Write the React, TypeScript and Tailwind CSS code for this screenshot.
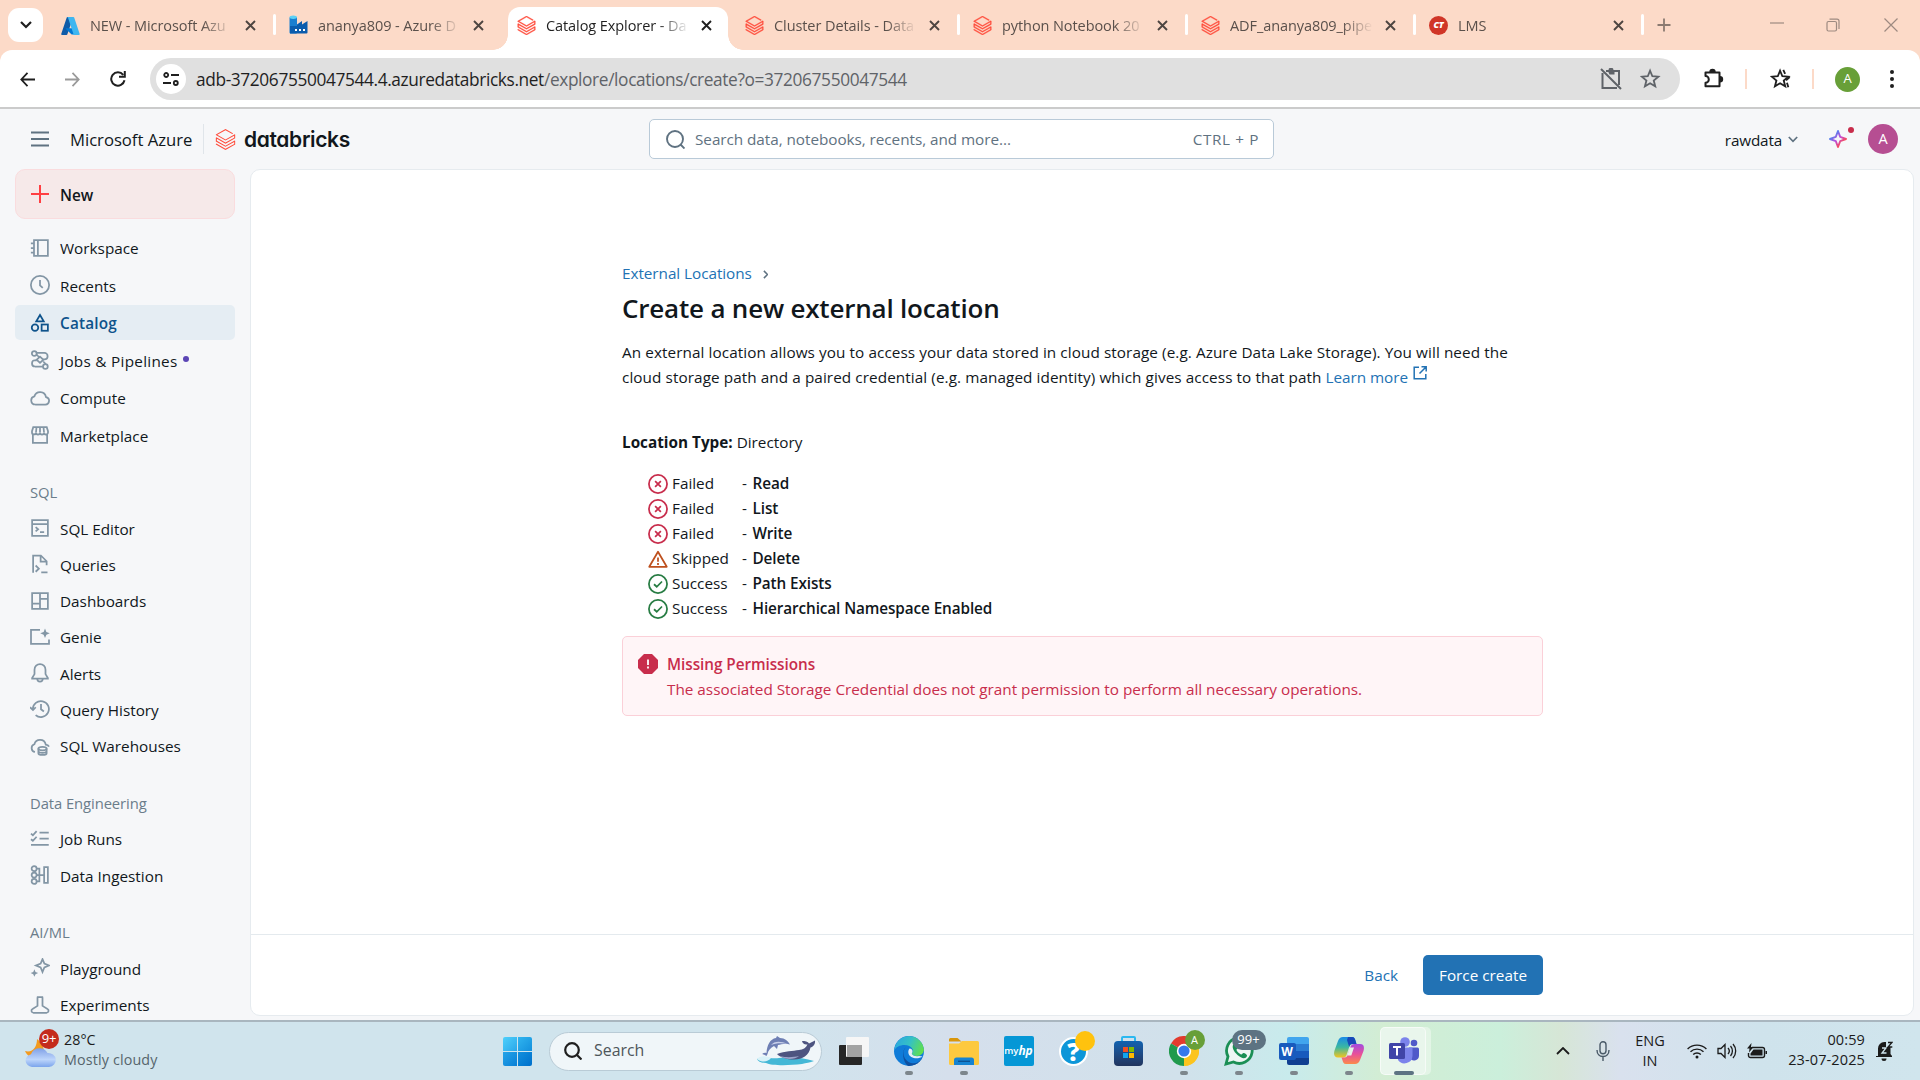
import type { ReactNode } from "react";
import { SiDatabricks } from "react-icons/si";

/* ---------- shared 16-unit line icon ---------- */
function Ico({ children, className = "size-5 text-[#8396a5]" }: { children: ReactNode; className?: string }) {
  return (
    <svg viewBox="0 0 16 16" className={className} fill="none" stroke="currentColor" strokeWidth="1.4">
      {children}
    </svg>
  );
}

const icons: Record<string, ReactNode> = {
  workspace: (
    <>
      <rect x="3.2" y="1.7" width="11.1" height="12.6" />
      <path d="M6.3 1.7v12.6M.7 4.3h2.5M.7 8h2.5M.7 11.7h2.5" />
    </>
  ),
  recents: (
    <>
      <circle cx="8" cy="8" r="7.3" />
      <path d="M8 4v4.3l2.2 2" />
    </>
  ),
  catalog: (
    <>
      <path d="M8 1.6l3 5H5z" />
      <circle cx="4" cy="11.7" r="2.6" />
      <rect x="9.3" y="9.2" width="5" height="5" />
    </>
  ),
  jobs: (
    <>
      <circle cx="3.4" cy="2.7" r="1.9" />
      <circle cx="12.3" cy="13.2" r="1.9" />
      <path d="M5.3 2.3h6.2a2.6 2.6 0 0 1 2.6 2.6c0 1.6-1.2 2.5-2.6 2.5h-1M5.4 8.2H4a2.5 2.5 0 0 0-2.4 2.5A2.5 2.5 0 0 0 4 13.2h6.3" />
      <path d="M8 5.3l2.7 2.5L8 10.3 5.300 7.8zM5.200 3.600l2 2M10.600 9.200l2 2" />
    </>
  ),
  compute: <path d="M4.200 13.200h8a3 3 0 0 0 .6-5.950A4.800 4.800 0 0 0 3.500 6.700a3.300 3.300 0 0 0 .7 6.500z" />,
  marketplace: (
    <>
      <path d="M2.300 7.500v6.800h11.400V7.500M2.600 1.700h10.800l1 3.300v1a1.600 1.600 0 0 1-3.200 0 1.600 1.600 0 0 1-3.200 0 1.600 1.600 0 0 1-3.200 0 1.600 1.600 0 0 1-3.200 0V5z" />
      <path d="M4.800 5.800l.4-4M8 5.800v-4M11.200 5.800l-.4-4" />
    </>
  ),
  sqlEditor: (
    <>
      <rect x="1.700" y="1.700" width="12.600" height="12.600" />
      <path d="M1.700 4.800h12.600M4.500 7.300l2 1.700-2 1.700M8 11.300h3.300" />
    </>
  ),
  queries: (
    <>
      <path d="M2.500 15V1.200h6.200l4.600 4.600V9M8.500 1.200V6h4.800" />
      <path d="M4.500 9.200l2.600 2.500-2.600 2.500M9 14.600h5" />
    </>
  ),
  dashboards: (
    <>
      <rect x="1.700" y="1.700" width="12.600" height="12.600" />
      <path d="M8 1.700v12.600M1.700 10H8M8 6.200h6.300" />
    </>
  ),
  genie: (
    <>
      <path d="M8 2.200H.8v11.200h14.400V10" />
      <path d="M12 1.200l1.100 2.700L15.800 5l-2.700 1.100L12 8.800l-1.100-2.700L8.200 5l2.700-1.100z" fill="currentColor" stroke="none" />
    </>
  ),
  alerts: (
    <>
      <path d="M8 .9a4.400 4.400 0 0 0-4.400 4.400v3.600L1.700 12v.4h12.600V12l-1.900-3.100V5.300A4.400 4.400 0 0 0 8 .9z" />
      <path d="M5.800 12.600a2.200 2.200 0 0 0 4.400 0" />
    </>
  ),
  history: (
    <>
      <path d="M2.300 8.200a6.400 6.400 0 1 1 2.200 4.700" />
      <path d="M0 6.600l2.400 2.300 2.200-2.300M8.800 4v4.200l2.300 1.800" />
    </>
  ),
  warehouses: (
    <>
      <path d="M4 12.800A3.200 3.200 0 0 1 3.500 6.600 4.700 4.700 0 0 1 12.600 6.800c1.200 0 2.200.7 2.600 1.700" />
      <ellipse cx="10" cy="10" rx="3.300" ry="1.400" />
      <path d="M6.700 10v3.700c0 .8 1.500 1.400 3.300 1.400s3.300-.6 3.300-1.400V10M6.700 12c0 .8 1.500 1.400 3.300 1.400s3.300-.6 3.300-1.400" />
    </>
  ),
  jobRuns: <path d="M.8 3.700l1.500 1.300 3-3.300M.8 8.200l1.500 1.300 3-3.300M7.600 2.800H15M7.600 7.700H15M.8 12.700H15" />,
  ingestion: (
    <>
      <circle cx="3.300" cy="2.900" r="2" />
      <circle cx="3.300" cy="8" r="2" />
      <circle cx="3.300" cy="13.100" r="2" />
      <path d="M5.300 2.900h2.200v10.200H5.300M5.300 8h5.500M14.300 1.700h-3v12.600h3zM7.500 8h3.800" />
    </>
  ),
  playground: (
    <>
      <path d="M10 .9l1.500 3.600 3.700 1.500-3.700 1.500L10 11.200 8.500 7.500 4.800 6l3.700-1.500z" />
      <path d="M3.500 9l.9 2.100 2.100.9-2.100.9-.9 2.100-.9-2.100L.5 12l2.100-.9z" fill="currentColor" stroke="none" />
    </>
  ),
  experiments: (
    <path d="M5.500 1.700h5M6 1.700v7L2 11.200a1.600 1.600 0 0 0 .6 3h10.800a1.600 1.600 0 0 0 .6-3L10 8.700v-7" />
  ),
};

/* ---------- browser chrome ---------- */
function Cross({ className = "size-[11px] text-[#4d4541]" }: { className?: string }) {
  return (
    <svg viewBox="0 0 11 11" className={className} stroke="currentColor" strokeWidth="1.9">
      <path d="M1 1l9 9M10 1l-9 9" />
    </svg>
  );
}

const AzureLogo = () => (
  <svg viewBox="0 0 96 96" className="size-[19px]">
    <path d="M33.300 5h28.400L32.200 92.400a4.500 4.500 0 0 1-4.300 3H5.800a4.500 4.500 0 0 1-4.300-6L29 8a4.500 4.500 0 0 1 4.300-3z" fill="#0f5ba8" />
    <path d="M71.200 62.300H26.100a2.100 2.100 0 0 0-1.400 3.600l29 27a4.500 4.500 0 0 0 3 1.200h25.600z" fill="#0078d4" />
    <path d="M66.600 8a4.500 4.500 0 0 0-4.300-3H30.700A4.500 4.500 0 0 1 35 8l27.400 81.400a4.500 4.500 0 0 1-4.300 6h31.600a4.500 4.500 0 0 0 4.300-6z" fill="#3fb6f0" />
  </svg>
);

const FactoryLogo = () => (
  <svg viewBox="0 0 20 20" className="size-5">
    <rect x=".5" y="2" width="7.500" height="16.500" rx="1" fill="#1b7fd0" />
    <ellipse cx="4.250" cy="2.300" rx="3.700" ry="1.700" fill="#5cd0f5" />
    <path d="M1 18.500V11h7V9.500l5-3.500v3.500L18.500 6v11.500a1 1 0 0 1-1 1z" fill="#0b5cad" />
    <path d="M6 14h2v2H6zM10 14h2v2h-2zM14 14h2v2h-2z" fill="#fff" />
  </svg>
);

const Bricks = () => <SiDatabricks className="size-[19px] stroke-[#ff4b3a] stroke-[0.5px] text-[#ff4b3a]" />;

const LmsLogo = () => (
  <span className="flex size-[19px] items-center justify-center rounded-full bg-[#d03527] text-[9px] font-extrabold italic tracking-tight text-white">
    CT
  </span>
);

type TabInfo = { title: string; icon: ReactNode; active?: boolean; sep?: boolean };
const tabs: TabInfo[] = [
  { title: "NEW - Microsoft Azu", icon: <AzureLogo />, sep: true },
  { title: "ananya809 - Azure D", icon: <FactoryLogo /> },
  { title: "Catalog Explorer - Da", icon: <Bricks />, active: true },
  { title: "Cluster Details - Data", icon: <Bricks />, sep: true },
  { title: "python Notebook 20", icon: <Bricks />, sep: true },
  { title: "ADF_ananya809_pipe", icon: <Bricks />, sep: true },
  { title: "LMS", icon: <LmsLogo />, sep: true },
];

function Tab({ title, icon, active, sep }: TabInfo) {
  return (
    <div className="relative flex h-[50px] w-[228px] shrink-0 items-center pl-[13px]">
      {active && (
        <>
          <div className="absolute top-[7px] bottom-0 left-[4px] w-[220px] rounded-t-[12px] bg-white" />
          <div className="absolute bottom-0 left-[-11px] size-[15px] bg-[radial-gradient(circle_at_0_0,transparent_14.500px,white_15px)]" />
          <div className="absolute bottom-0 left-[224px] size-[15px] bg-[radial-gradient(circle_at_100%_0,transparent_14.500px,white_15px)]" />
        </>
      )}
      <span className="relative flex w-[29px] shrink-0">{icon}</span>
      <span
        className={
          "relative mt-px w-[144px] text-[14.500px] leading-6 tracking-[-0.080px] whitespace-nowrap [mask-image:linear-gradient(to_right,black_112px,transparent_143px)] " +
          (active ? "text-[#1f1f1f]" : "text-[#5a504b]")
        }
      >
        {title}
      </span>
      <span className="relative ml-[11px]">
        <Cross className={active ? "size-[11px] text-[#1f1f1f]" : "size-[11px] text-[#4d4541]"} />
      </span>
      {sep && <span className="absolute top-[14px] right-0 h-[21px] w-[3px] rounded bg-white" />}
    </div>
  );
}

function TabStrip() {
  return (
    <div className="flex h-[50px] items-center bg-[#fcdac8] pl-2">
      <div className="mr-[5px] flex h-[34px] w-[35px] items-center justify-center rounded-[11px] bg-white">
        <svg viewBox="0 0 12 8" className="w-3" fill="none" stroke="#1f1f1f" strokeWidth="2.200">
          <path d="M1 1l5 5 5-5" />
        </svg>
      </div>
      {tabs.map((t) => (
        <Tab key={t.title} {...t} />
      ))}
      <svg viewBox="0 0 14 14" className="ml-[13px] size-[14px]" stroke="#8b7a71" strokeWidth="1.800">
        <path d="M7 .5v13M.5 7h13" />
      </svg>
      <div className="ml-auto flex items-center pr-[22px] text-[#9d8a80]">
        <svg viewBox="0 0 14 14" className="mb-1 size-[14px]" stroke="currentColor" strokeWidth="1.200">
          <path d="M0 7h14" />
        </svg>
        <svg viewBox="0 0 14 14" className="ml-[42px] size-[14px]" fill="none" stroke="currentColor" strokeWidth="1.200">
          <rect x="1" y="3.500" width="9.500" height="9.500" rx="1.500" />
          <path d="M3.500 1.200H11a2 2 0 0 1 2 2V11" />
        </svg>
        <svg viewBox="0 0 14 14" className="ml-[44px] size-[14px]" stroke="currentColor" strokeWidth="1.200">
          <path d="M.5.5l13 13M13.500.5l-13 13" />
        </svg>
      </div>
    </div>
  );
}

function Star({ lines = false }: { lines?: boolean }) {
  return (
    <svg viewBox="0 0 24 24" className="size-[22px]" fill="none" stroke="currentColor" strokeWidth="2">
      <path d="M11 3l2.500 6 6.500.5-5 4.200 1.600 6.300-5.600-3.400L5.400 20 7 13.700 2 9.500l6.500-.5z" />
      {lines && <path d="M14.500 2l2 4.500M17.500 13.500l4-3.500M18.500 16l1.500 5" />}
    </svg>
  );
}

function Toolbar() {
  return (
    <div className="bg-[#fcdac8]">
      <div className="flex h-[57px] items-center rounded-t-[12px] bg-white pt-px pl-5">
        <svg viewBox="0 0 16 16" className="size-[15px]" fill="none" stroke="#1f1f1f" strokeWidth="1.900">
          <path d="M8 1L1.400 8 8 15M1.400 8H16" />
        </svg>
        <svg viewBox="0 0 16 16" className="ml-[30px] size-[15px]" fill="none" stroke="#9a9a9a" strokeWidth="1.900">
          <path d="M8 1l6.600 7L8 15M14.600 8H0" />
        </svg>
        <svg viewBox="0 0 16 16" className="ml-[30px] size-4" fill="none" stroke="#1f1f1f" strokeWidth="2">
          <path d="M14.500 9.300A6.700 6.700 0 1 1 13.200 3.800M14.800 0v5.700H9" />
        </svg>
        <div className="ml-6 flex h-[42px] w-[1530px] items-center rounded-full bg-[#e0e0e0] pl-[6px]">
          <div className="flex size-[30px] items-center justify-center rounded-full bg-white">
            <svg viewBox="0 0 16 16" className="size-4" fill="none" stroke="#1f1f1f" strokeWidth="1.800">
              <circle cx="3.200" cy="4" r="2" />
              <path d="M8 4h8M0 12h8" />
              <circle cx="12.800" cy="12" r="2" />
            </svg>
          </div>
          <div className="mt-[2px] ml-[10px] text-[17.300px] leading-7 tracking-[-0.370px] whitespace-nowrap text-[#5f6368]">
            <span className="text-[#1f1f1f]">adb-372067550047544.4.azuredatabricks.net</span>
            /explore/locations/create?o=372067550047544
          </div>
          <div className="ml-auto flex items-center gap-[18px] pr-[18px] text-[#5f6368]">
            <svg viewBox="0 0 22 22" className="size-[22px]" fill="none" stroke="currentColor" strokeWidth="2">
              <path d="M6 3h13v14M2.500 5v15H17M1 1l20 20" />
              <path d="M7.500 2h7v4.500h-5z" fill="currentColor" stroke="none" />
              <circle cx="11" cy="2.200" r="1.500" />
            </svg>
            <Star />
          </div>
        </div>
        <svg viewBox="0 0 22 22" className="ml-[22px] size-[22px] text-[#1f1f1f]" fill="none" stroke="currentColor" strokeWidth="2">
          <path d="M3.500 4.500h14v13.800h-14v-3.600a3.300 3.300 0 0 0 0-6.600z" strokeLinejoin="round" />
          <path d="M8.300 4a2.200 2.200 0 0 1 4.400 0M18 9a2.200 2.200 0 0 1 0 4.400" fill="currentColor" />
        </svg>
        <span className="ml-[21px] h-5 w-[2px] bg-[#fcdac8]" />
        <span className="ml-[23px] text-[#1f1f1f]">
          <Star lines />
        </span>
        <span className="ml-[20px] h-5 w-[2px] bg-[#fcdac8]" />
        <span className="ml-[21px] flex size-[25px] items-center justify-center rounded-full bg-[#689f38] text-[13px] text-white">A</span>
        <span className="ml-[30px] flex flex-col gap-[3px]">
          <i className="size-1 rounded-full bg-[#1f1f1f]" />
          <i className="size-1 rounded-full bg-[#1f1f1f]" />
          <i className="size-1 rounded-full bg-[#1f1f1f]" />
        </span>
      </div>
      <div className="h-[2px] bg-[#cbcbcb]" />
    </div>
  );
}

/* ---------- application ---------- */
function AppHeader() {
  return (
    <header className="flex h-[60px] shrink-0 items-center pl-[31px]">
      <svg viewBox="0 0 18 16" className="h-4 w-[18px]" stroke="#5f7281" strokeWidth="2">
        <path d="M0 1.500h18M0 8h18M0 14.500h18" />
      </svg>
      <span className="mt-px ml-[21px] w-[123px] text-[16.700px] tracking-[-0.030px] whitespace-nowrap text-[#11171c]">Microsoft Azure</span>
      <span className="ml-[10px] h-[30px] w-px bg-[#e0e5ea]" />
      <SiDatabricks className="ml-[11px] size-[21px] text-[#ff4b3a]" />
      <span className="mt-px ml-[8px] w-[107px] font-['Inter',sans-serif] text-[21px] leading-6 font-semibold tracking-[-0.350px] whitespace-nowrap text-[#11171c] [font-feature-settings:'cv11']">
        databricks
      </span>
      <div className="ml-[298px] flex h-10 w-[625px] items-center rounded-[5px] border border-[#b9cad8] bg-white pr-[14px] pl-4 text-[#5f7281]">
        <svg viewBox="0 0 19 19" className="size-[19px]" fill="none" stroke="currentColor" strokeWidth="1.900">
          <circle cx="9" cy="9" r="8" />
          <path d="M14.500 14.500l4 4" />
        </svg>
        <span className="ml-[10px] text-[15.300px] tracking-[-0.050px]">Search data, notebooks, recents, and more...</span>
        <span className="mt-px ml-auto text-[15.300px] tracking-[0.600px]">CTRL + P</span>
      </div>
      <div className="ml-auto flex items-center pr-[22px]">
        <span className="mt-[2px] text-[15.300px] tracking-[-0.180px] text-[#11171c]">rawdata</span>
        <svg viewBox="0 0 10 7" className="ml-[6px] w-[10px]" fill="none" stroke="#5f7281" strokeWidth="1.700">
          <path d="M.8 1L5 5.300 9.200 1" />
        </svg>
        <span className="relative ml-[31px]">
          <svg viewBox="0 0 18 18" className="size-[18px]" fill="none" stroke="url(#spark)" strokeWidth="1.900" strokeLinejoin="round">
            <defs>
              <linearGradient id="spark" x1="0" y1="0" x2="1" y2="1">
                <stop offset=".2" stopColor="#4a86f0" />
                <stop offset=".5" stopColor="#c04bd8" />
                <stop offset=".8" stopColor="#ff4b4b" />
              </linearGradient>
            </defs>
            <path d="M9 1l2.200 5.800L17 9l-5.800 2.200L9 17l-2.200-5.800L1 9l5.800-2.200z" />
          </svg>
          <i className="absolute -top-[3px] left-[19px] size-[6px] rounded-full bg-[#c82d4c]" />
        </span>
        <span className="ml-[21px] flex size-[30px] items-center justify-center rounded-full bg-[#b64e92] text-[14.500px] text-white">A</span>
      </div>
    </header>
  );
}

type Item = { icon: string; label: string; active?: boolean; dot?: boolean };

function NavItem({ icon, label, active, dot }: Item) {
  return (
    <div
      className={
        "flex h-[35px] items-center rounded-[5px] pl-[15px] text-[15.300px] leading-5 " +
        (active ? "bg-[#e5edf3] font-semibold tracking-[0.200px] text-[#0e538b]" : "text-[#11171c]")
      }
    >
      <Ico className={active ? "size-5 text-[#0e538b]" : "size-5 text-[#8396a5]"}>{icons[icon]}</Ico>
      <span className={dot ? "mt-px ml-[10px] tracking-[0.280px] whitespace-nowrap" : "mt-px ml-[10px] whitespace-nowrap"}>
        {label}
      </span>
      {dot && <i className="mb-[3px] ml-[5px] size-[6px] rounded-full bg-[#5b45b5]" />}
    </div>
  );
}

const groups: { title: string; items: Item[] }[] = [
  {
    title: "SQL",
    items: [
      { icon: "sqlEditor", label: "SQL Editor" },
      { icon: "queries", label: "Queries" },
      { icon: "dashboards", label: "Dashboards" },
      { icon: "genie", label: "Genie" },
      { icon: "alerts", label: "Alerts" },
      { icon: "history", label: "Query History" },
      { icon: "warehouses", label: "SQL Warehouses" },
    ],
  },
  {
    title: "Data Engineering",
    items: [
      { icon: "jobRuns", label: "Job Runs" },
      { icon: "ingestion", label: "Data Ingestion" },
    ],
  },
  {
    title: "AI/ML",
    items: [
      { icon: "playground", label: "Playground" },
      { icon: "experiments", label: "Experiments" },
    ],
  },
];

function Sidebar() {
  return (
    <nav className="flex w-[250px] shrink-0 flex-col overflow-hidden pr-[15px] pl-[15px]">
      <div className="flex h-[50px] shrink-0 items-center rounded-[10px] border border-[#fadcde] bg-[#f6e9e9] pl-[15px]">
        <svg viewBox="0 0 18 18" className="size-[18px]" stroke="#ff3f42" strokeWidth="2">
          <path d="M9 0v18M0 9h18" />
        </svg>
        <span className="mt-[3px] ml-[11px] text-[15.300px] font-semibold text-[#11171c]">New</span>
      </div>
      <div className="mt-[11.250px] flex flex-col gap-[2.500px]">
        <NavItem icon="workspace" label="Workspace" />
        <NavItem icon="recents" label="Recents" />
        <NavItem icon="catalog" label="Catalog" active />
        <NavItem icon="jobs" label="Jobs & Pipelines" dot />
        <NavItem icon="compute" label="Compute" />
        <NavItem icon="marketplace" label="Marketplace" />
      </div>
      <div className="mt-[21px]">
        {groups.map((g) => (
          <div key={g.title} className="mb-[21.500px]">
            <div className="flex h-[36.800px] items-center pl-[15px] text-[14.800px] tracking-[-0.080px] text-[#6b7d8b]">{g.title}</div>
            <div className="flex flex-col gap-[1.250px]">
              {g.items.map((i) => (
                <NavItem key={i.label} {...i} />
              ))}
            </div>
          </div>
        ))}
      </div>
    </nav>
  );
}

type Status = "Failed" | "Skipped" | "Success";
const checks: { status: Status; name: string }[] = [
  { status: "Failed", name: "Read" },
  { status: "Failed", name: "List" },
  { status: "Failed", name: "Write" },
  { status: "Skipped", name: "Delete" },
  { status: "Success", name: "Path Exists" },
  { status: "Success", name: "Hierarchical Namespace Enabled" },
];

function StatusIcon({ status }: { status: Status }) {
  if (status === "Failed")
    return (
      <Ico className="size-5 text-[#c82d4c]">
        <circle cx="8" cy="8" r="7.250" />
        <path d="M5.700 5.700l4.600 4.600M10.300 5.700l-4.600 4.600" />
      </Ico>
    );
  if (status === "Skipped")
    return (
      <Ico className="size-5 text-[#be501e]">
        <path d="M8 2.200l7 12H1z" strokeLinejoin="round" />
        <path d="M8 6.700v3.500M8 11.200v1.500" />
      </Ico>
    );
  return (
    <Ico className="size-5 text-[#277c43]">
      <circle cx="8" cy="8" r="7.250" />
      <path d="M4.800 8.200l2.200 2 4.200-4.200" />
    </Ico>
  );
}

function Main() {
  return (
    <main className="mb-[4px] flex w-[1664px] flex-col rounded-[10px] border border-[#e6ebef] bg-white">
      <div className="ml-[371px] w-[921px] flex-1 pt-[90px] text-[15.300px] leading-[25px] text-[#11171c]">
        <div className="flex h-[26px] items-center">
          <span className="tracking-[-0.050px] text-[#2272b4]">External Locations</span>
          <svg viewBox="0 0 6 10" className="mt-[3px] ml-[11px] h-[9px]" fill="none" stroke="#5f7281" strokeWidth="1.700">
            <path d="M1 1l4 4-4 4" />
          </svg>
        </div>
        <h1 className="mt-[2px] text-[26px] leading-10 font-semibold tracking-[-0.200px]">Create a new external location</h1>
        <p className="mt-[12px] tracking-[0.075px] whitespace-nowrap">
          An external location allows you to access your data stored in cloud storage (e.g. Azure Data Lake Storage). You will need the
          <br />
          cloud storage path and a paired credential (e.g. managed identity) which gives access to that path{" "}
          <span className="tracking-[-0.050px] text-[#2272b4]">Learn more</span>
          <svg viewBox="0 0 14 14" className="mb-[11px] ml-[5px] inline size-[14px]" fill="none" stroke="#2272b4" strokeWidth="1.500">
            <path d="M6 1.200H1.200v11.600h11.600V8M8.500.8h4.700v4.700M13 1L6.500 7.500" />
          </svg>
        </p>
        <p className="mt-[39px]">
          <b>Location Type:</b> Directory
        </p>
        <ul className="mt-[16px] pl-[26px]">
          {checks.map((c) => (
            <li key={c.name} className="flex h-[25px] items-center">
              <StatusIcon status={c.status} />
              <span className="ml-[4px] w-[70px]">{c.status}</span>
              <span className="w-[10.500px]">-</span>
              <span className="font-semibold tracking-[-0.100px]">{c.name}</span>
            </li>
          ))}
        </ul>
        <div className="mt-[15px] flex h-20 rounded-[5px] border border-[#fbd0d8] bg-[#fff5f7] pt-[15px] pl-[15px] text-[#c82d4c]">
          <svg viewBox="0 0 20 20" className="mt-[2px] size-5">
            <path d="M6 0h8l6 6v8l-6 6H6l-6-6V6z" fill="#c82d4c" />
            <path d="M10 5.500v5.500M10 12.500v2" stroke="#fff" strokeWidth="1.800" />
          </svg>
          <div className="ml-[9px] whitespace-nowrap">
            <div className="font-semibold tracking-[-0.050px]">Missing Permissions</div>
            <div>The associated Storage Credential does not grant permission to perform all necessary operations.</div>
          </div>
        </div>
      </div>
      <footer className="flex h-[81px] items-center justify-end border-t border-[#e4eaee] pr-[370px] pb-px text-[15.300px]">
        <span className="mt-px mr-[25px] text-[#2272b4]">Back</span>
        <span className="flex h-10 w-[120px] items-center justify-center rounded-[5px] bg-[#2272b4] pt-[2px] text-white">Force create</span>
      </footer>
    </main>
  );
}

/* ---------- taskbar ---------- */
function AppSlot({ children, running, wide }: { children: ReactNode; running?: boolean; wide?: boolean }) {
  return (
    <div className="relative flex h-[59px] w-[55px] shrink-0 items-center justify-center">
      {wide && (
        <>
          <i className="absolute top-[5px] left-[7px] h-[48px] w-[48px] rounded-[5px] bg-white/40" />
          <i className="absolute top-[5px] left-[4px] h-[48px] w-[46px] rounded-[5px] border border-white/60 bg-[#e9f6ec]" />
        </>
      )}
      <span className="relative">{children}</span>
      {running && (
        <i
          className={
            wide
              ? "absolute bottom-[6px] left-[18px] h-[4px] w-5 rounded-full bg-[#5d7382]"
              : "absolute bottom-[6px] h-[4px] w-2 rounded-full bg-[#7d868c]"
          }
        />
      )}
    </div>
  );
}

const EdgeLogo = () => (
  <svg viewBox="0 0 30 30" className="size-[30px]">
    <defs>
      <linearGradient id="edgeTop" x1="0" y1=".3" x2="1" y2=".6">
        <stop offset="0" stopColor="#2aa7e0" />
        <stop offset=".5" stopColor="#35c1c4" />
        <stop offset="1" stopColor="#62e04a" />
      </linearGradient>
      <clipPath id="edgeClip">
        <circle cx="15" cy="15" r="15" />
      </clipPath>
    </defs>
    <g clipPath="url(#edgeClip)">
      <rect width="30" height="30" fill="#0f7bd8" />
      <path d="M12 11c-5 5-2 14 5 16 5 1 9-1 11-5l2 8H14C9 26 7 15 12 11z" fill="#10509f" />
      <path d="M0 15C1 5 8 0 15 0c8.500 0 15 6 15 13 0 4-3 7-7 7-3 0-5.500-1-5-3 1-1 1-2.500.500-4C17 10.500 14 9 10.500 9 6 9 1.500 11 0 15z" fill="url(#edgeTop)" />
      <path d="M15.500 12.500c2 0 3.300 1.500 3 3.300-.2 1-1 1.500-.5 2.500 1 1.700 4 2.200 7 1.700l3.500.5c-5 3.500-13 1.500-14-3-.5-2 0-4 1-5z" fill="#e3edf5" />
    </g>
  </svg>
);

const ExplorerLogo = () => (
  <svg viewBox="0 0 30 27" className="h-[27px] w-[30px]">
    <path d="M0 1.500A1.500 1.500 0 0 1 1.500 0h7l4 3.500H0z" fill="#d9960b" />
    <path d="M0 5.500h10L13 3h15.500A1.500 1.500 0 0 1 30 4.500v21a1.500 1.500 0 0 1-1.500 1.500h-27A1.500 1.500 0 0 1 0 25.500z" fill="#fdc93f" />
    <path d="M5 27v-5a2.500 2.500 0 0 1 2.500-2.500h15A2.500 2.500 0 0 1 25 22v5z" fill="#1583d2" />
    <path d="M9 23.300h12" stroke="#0b5394" strokeWidth="1.400" />
  </svg>
);

const ChromeLogo = () => (
  <svg viewBox="0 0 30 30" className="size-[30px]">
    <path d="M15 15L2 7.500A15 15 0 0 1 28 7.500z" fill="#e23b2e" />
    <path d="M15 15l13-7.500A15 15 0 0 1 15 30z" fill="#fcc41e" />
    <path d="M15 15v0L15 30A15 15 0 0 1 2 7.500z" fill="#209a4d" />
    <path d="M15 8h13.200A15 15 0 0 1 15 30l6-11.500z" fill="#fcc41e" />
    <circle cx="15" cy="15" r="7.200" fill="#fff" />
    <circle cx="15" cy="15" r="5.600" fill="#3478ec" />
  </svg>
);

const WhatsAppLogo = () => (
  <svg viewBox="0 0 30 30" className="size-[30px]" fill="none">
    <path d="M2 28l2-7.500A12.800 12.800 0 1 1 9.500 26z" fill="#eef6f4" stroke="#1a8f55" strokeWidth="2.800" />
    <path d="M10 7.500c-3 3-.5 8 3.500 11.500s8 4.500 9.500 1c.5-1.500-2.500-3-3.500-3s-1.500 2-2.500 1.500c-2-1-4-3-4.500-4.500 0-1 1.500-1.500 1.200-2.500C13.200 10 12 7 10 7.500z" fill="#1a8f55" />
  </svg>
);

const WordLogo = () => (
  <span className="relative block h-[28px] w-[30px]">
    <span className="absolute top-0 right-0 flex h-[28px] w-[22px] flex-col overflow-hidden rounded-[2px]">
      <i className="flex-1 bg-[#41a5ee]" />
      <i className="flex-1 bg-[#2b7cd3]" />
      <i className="flex-1 bg-[#185abd]" />
      <i className="flex-1 bg-[#103f91]" />
    </span>
    <span className="absolute top-[6px] left-0 flex size-[17px] items-center justify-center rounded-[2px] bg-[#185abd] text-[12px] leading-none font-bold text-white">W</span>
  </span>
);

const CopilotLogo = () => (
  <svg viewBox="0 0 30 28" className="h-[28px] w-[30px]">
    <defs>
      <linearGradient id="cpA" x1="0" y1="0" x2="0" y2="1">
        <stop offset="0" stopColor="#1a8be8" />
        <stop offset=".5" stopColor="#3bb8a0" />
        <stop offset="1" stopColor="#f4c51e" />
      </linearGradient>
      <linearGradient id="cpB" x1="0" y1="0" x2="0" y2="1">
        <stop offset="0" stopColor="#a24be0" />
        <stop offset=".5" stopColor="#e8509a" />
        <stop offset="1" stopColor="#fb8a4a" />
      </linearGradient>
    </defs>
    <path d="M9 0h9c2.500 0 3 2 3.600 4l.9 3h-4c-2 0-2.700 1-3.300 3l-2.700 8c-.6 2-1.800 2.500-4 2.500H4c-4 0-4.500-3-3.500-7L4 4C5 1.500 6.500 0 9 0z" fill="url(#cpA)" />
    <path d="M14 0h4c2.500 0 3 2 3.600 4l.9 3h-4c-2 0-2.700 1-3.300 3L13 3z" fill="#1748b8" />
    <path d="M21 27h-9c-2.500 0-3-2-3.600-4l-.9-2.500h3c2 0 2.700-1 3.300-3l2.700-7.500c.6-2 1.800-3 4-3H26c4 0 4.500 3 3.500 7L26 23c-1 2.500-2.500 4-5 4z" fill="url(#cpB)" />
    <path d="M16 10.500h4l-2.700 8h-4z" fill="#e6f3ea" />
  </svg>
);

const TeamsLogo = () => (
  <svg viewBox="0 0 30 28" className="h-[28px] w-[30px]">
    <circle cx="25" cy="6" r="3.300" fill="#5059c9" />
    <path d="M20 10.500h8.500A1.500 1.500 0 0 1 30 12v6.500a5 5 0 0 1-9 3z" fill="#5059c9" />
    <circle cx="16" cy="5" r="4.800" fill="#7b83eb" />
    <path d="M9 10.500h14.500V19a8 8 0 0 1-14.500 4z" fill="#7b83eb" />
    <rect y="6" width="16" height="16" rx="1.500" fill="#4045a8" />
    <path d="M4 10h8M8 10v8.500" stroke="#fff" strokeWidth="2" />
  </svg>
);

const Dolphins = () => (
  <svg viewBox="0 0 60 30" className="h-[30px] w-[60px]">
    <path d="M1 23c6-3 14 0 22-1s24-1 35 3c-4 2-8 1.500-12 3-12 1.500-30 2-36-1-4 0-8-1-9-4z" fill="#45b8d6" />
    <path d="M1 23c3-4 10-3 14-1-3 4-9 5-14 1z" fill="#d9f2f8" />
    <path d="M6 18c1.500-1 3-1.500 4.500-1C11 9 14 3 20 2l1-2 3 2c5 0 8 3 10 6.500-5-1-9 0-12 .5l-1 4-3-3c-4 2-6 5-6.500 8l-1 2c-1.500-1-3-1.500-4.500-2z" fill="#6e7fb4" />
    <path d="M15 9c3-4 9-4.500 17-1-6-1-12-1-17 1z" fill="#c8d0ea" />
    <path d="M21 18c8-3 16-3 22-4 4-.5 7-2 8.500-5.500-3 .5-5-1-5.500-3.500 3 0 6 .5 7 2.500l6-3c.500 4-2 6.500-4.500 7-1.500 8-8 12-16.500 12-7 0-14-2-17-5.500z" fill="#4d5480" />
    <path d="M24 20c7 2 14 1 19 0-4 4-14 4-19 0z" fill="#9ba3c9" />
  </svg>
);

function Taskbar() {
  return (
    <div className="flex h-[60px] items-center border-t-2 border-[#a9b6bf] bg-[linear-gradient(to_right,#d0e4ed_0px,#d0e4ed_780px,#d5dfec_950px,#d1e1eb_1180px,#c8ebec_1290px,#d3edd3_1385px,#cbefdb_1500px,#d6e6d6_1560px,#d9e1ee_1620px,#cfe3ec_1760px,#d0e5ed_1920px)]">
      <div className="flex w-[503px] items-center pl-[25px]">
        <span className="relative">
          <svg viewBox="0 0 32 36" className="h-9 w-8">
            <defs>
              <linearGradient id="cl" x1="0" y1="0" x2="0" y2="1">
                <stop offset="0" stopColor="#7e9fe6" />
                <stop offset=".6" stopColor="#bdd5fb" />
                <stop offset="1" stopColor="#7ba4ec" />
              </linearGradient>
            </defs>
            <path d="M0 18c8 2 12-4 12-12 6 4 9 12 5 18-6 3-14 1-17-6z" fill="#f39a1e" />
            <path d="M7 34a7 6.500 0 0 1-1-12.800A9 9 0 0 1 22.500 20 7.500 7 0 0 1 24 34z" fill="url(#cl)" />
          </svg>
          <span className="absolute -top-[4px] left-[14px] flex size-5 items-center justify-center rounded-full bg-[#c42b1c] text-[13px] tracking-[-0.300px] text-white">9+</span>
        </span>
        <span className="-mt-[2px] ml-[7px] text-[14.300px] leading-5 tracking-[0.050px] text-[#1c1c1c]">
          28°C
          <br />
          <span className="tracking-[0.150px] text-[#56646c]">Mostly cloudy</span>
        </span>
      </div>
      <div className="grid size-[29px] grid-cols-2 gap-px overflow-hidden rounded-[2px]">
        <i className="bg-gradient-to-br from-[#4fd0fb] to-[#28a7ea]" />
        <i className="bg-gradient-to-br from-[#30b4ef] to-[#1290dd]" />
        <i className="bg-gradient-to-br from-[#25a4e8] to-[#087fd6]" />
        <i className="bg-gradient-to-br from-[#1390de] to-[#006fcb]" />
      </div>
      <div className="ml-[17px] flex h-[39px] w-[273px] items-center rounded-full border border-[#b9cbd6] bg-[#f0f6f9] pl-[14px]">
        <svg viewBox="0 0 18 18" className="size-[18px]" fill="none" stroke="#1f1f1f" strokeWidth="2.200">
          <circle cx="8" cy="8" r="6.800" />
          <path d="M13 13l4.500 4.500" />
        </svg>
        <span className="ml-[12px] text-[15.900px] text-[#4e565b]">Search</span>
        <span className="mr-[5px] ml-auto">
          <Dolphins />
        </span>
      </div>
      <div className="ml-[4px] flex">
        <AppSlot>
          <span className="relative block h-[28px] w-[30px]">
            <i className="absolute bottom-0 left-0 h-[20px] w-[23px] rounded-[1px] bg-[#262626]" />
            <i className="absolute top-0 right-0 h-[20px] w-[23px] rounded-[1px] bg-[#f6f6f6]" />
            <i className="absolute top-[8px] left-[8px] h-[12px] w-[15px] bg-[#a3a3a3]" />
          </span>
        </AppSlot>
        <AppSlot running><EdgeLogo /></AppSlot>
        <AppSlot running><ExplorerLogo /></AppSlot>
        <AppSlot>
          <span className="flex size-[30px] items-center justify-center rounded-[2px] bg-[#0597d6] text-[9.500px] font-semibold text-white">
            my<span className="text-[12px] font-bold italic">hp</span>
          </span>
        </AppSlot>
        <AppSlot>
          <span className="flex size-[29px] items-center justify-center rounded-full border-2 border-white bg-[#0d96d8] text-[25px] leading-none font-extrabold text-white">?</span>
          <i className="absolute -top-[6px] left-[16px] size-5 rounded-full bg-[#ffc20e]" />
        </AppSlot>
        <AppSlot>
          <span className="relative block h-[30px] w-[29px]">
            <i className="absolute top-0 left-[7px] h-[9px] w-[15px] rounded-t-[2px] border-2 border-[#2bb8f0]" />
            <i className="absolute bottom-0 left-0 h-[25px] w-[29px] rounded-[4px] bg-gradient-to-b from-[#0e62b0] to-[#20355e]" />
            <span className="absolute top-[11px] left-[9px] grid size-[11px] grid-cols-2 gap-px">
              <i className="bg-[#f25022]" />
              <i className="bg-[#7fba00]" />
              <i className="bg-[#12a5ef]" />
              <i className="bg-[#ffb900]" />
            </span>
          </span>
        </AppSlot>
        <AppSlot running>
          <ChromeLogo />
          <span className="absolute -top-[6px] left-[16px] flex size-5 items-center justify-center rounded-full bg-[#689f38] text-[11px] text-white">A</span>
        </AppSlot>
        <AppSlot running>
          <WhatsAppLogo />
          <span className="absolute -top-[6px] left-[8px] flex h-5 w-[34px] items-center justify-center rounded-full bg-[#5d7382] text-[13px] text-white">99+</span>
        </AppSlot>
        <AppSlot running><WordLogo /></AppSlot>
        <AppSlot running><CopilotLogo /></AppSlot>
        <AppSlot running wide><TeamsLogo /></AppSlot>
      </div>
      <div className="ml-auto flex items-center pr-[27px] text-[#1b1b1b]">
        <svg viewBox="0 0 14 8" className="w-[14px]" fill="none" stroke="currentColor" strokeWidth="1.800">
          <path d="M1 7l6-6 6 6" />
        </svg>
        <svg viewBox="0 0 14 20" className="ml-[26px] h-5 w-[14px]" fill="none" stroke="#4a5a68" strokeWidth="1.400">
          <rect x="4" y=".8" width="6" height="12" rx="3" />
          <path d="M1 9c0 4 2.500 6.500 6 6.500S13 13 13 9M7 15.500V20" />
        </svg>
        <span className="-mt-px ml-[21px] w-[38px] text-center text-[14.500px] leading-5">
          ENG
          <br />
          IN
        </span>
        <svg viewBox="0 0 20 16" className="ml-[18px] h-4 w-5" fill="none" stroke="currentColor" strokeWidth="1.400">
          <path d="M.6 6a13.300 13.300 0 0 1 18.800 0M3.500 8.800a9.200 9.200 0 0 1 13 0M6.200 11.500a5.400 5.400 0 0 1 7.600 0" />
          <circle cx="10" cy="14" r="1.500" fill="currentColor" stroke="none" />
        </svg>
        <svg viewBox="0 0 20 16" className="ml-[10px] h-4 w-5" fill="none" stroke="currentColor" strokeWidth="1.300">
          <path d="M1 5.500h3l4-4v13l-4-4H1zM11 5a4.500 4.500 0 0 1 0 6M13.500 3a7.500 7.500 0 0 1 0 10M16 1a10.500 10.500 0 0 1 0 14" />
        </svg>
        <svg viewBox="0 0 20 16" className="ml-[10px] h-4 w-5">
          <path d="M5 4.500h10.500a2 2 0 0 1 2 2v6a2 2 0 0 1-2 2h-12a2 2 0 0 1-2-2V10" fill="none" stroke="currentColor" strokeWidth="1.400" />
          <path d="M6.500 6.500h9v6h-12v-2zM18.500 8h1.500v3h-1.500zM4.500 0L0 5.500h2.500L2 9.500 6.500 4H4z" fill="currentColor" />
        </svg>
        <span className="-mt-[2px] w-[98px] text-right text-[14.500px] leading-5 tracking-[0.120px] whitespace-nowrap">
          00:59
          <br />
          23-07-2025
        </span>
        <svg viewBox="0 0 17 20" className="ml-[11px] h-5 w-[17px]">
          <path d="M2 15V7.500A6.300 6.300 0 0 1 8.300 1H10v5h4.500v7l1.500 2v1H0v-1zM5.500 17.500h5a2.500 2.500 0 0 1-5 0z" fill="currentColor" />
          <path d="M6 7h4l-4 5h4.500" stroke="#d0e5ed" strokeWidth="1.300" fill="none" />
          <path d="M12 1.500h4l-4 4.500h4.300" stroke="currentColor" strokeWidth="1.300" fill="none" />
        </svg>
      </div>
    </div>
  );
}

export default function App() {
  return (
    <div className="flex h-[1080px] w-[1920px] flex-col overflow-hidden bg-[#f6f7f9] font-['Open_Sans','Noto_Sans',sans-serif]">
      <TabStrip />
      <Toolbar />
      <AppHeader />
      <div className="flex min-h-0 flex-1">
        <Sidebar />
        <Main />
      </div>
      <Taskbar />
    </div>
  );
}
